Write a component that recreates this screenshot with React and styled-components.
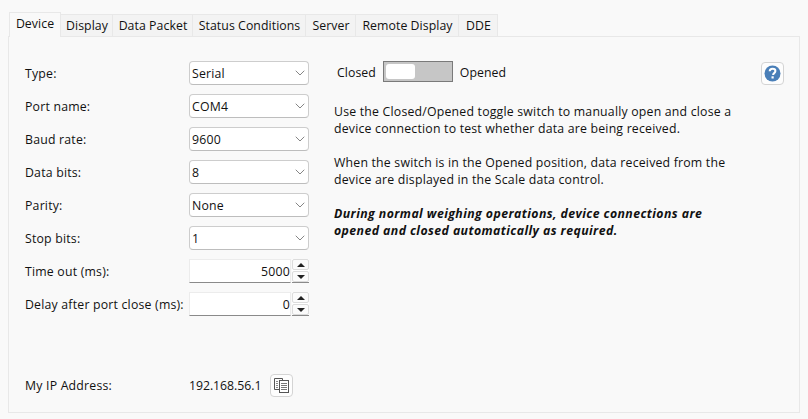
import React from 'react'
import styled, { createGlobalStyle } from 'styled-components'
import { ChevronDown } from 'lucide-react'

const GlobalStyle = createGlobalStyle`
    html, body {
        margin: 0;
        padding: 0;
        background: #f9f9f9;
    }
    body {
        font-family: "Open Sans", "Noto Sans", sans-serif;
        font-size: 12.3px;
        letter-spacing: 0.2px;
        color: #111;
    }
`

const selects = [
    { label: 'Type:', value: 'Serial' },
    { label: 'Port name:', value: 'COM4' },
    { label: 'Baud rate:', value: '9600' },
    { label: 'Data bits:', value: '8' },
    { label: 'Parity:', value: 'None' },
    { label: 'Stop bits:', value: '1' },
]

const spinners = [
    { label: 'Time out (ms):', value: '5000' },
    { label: 'Delay after port close (ms):', value: '0' },
]

const tabs = [
    { name: 'Device', width: 52 },
    { name: 'Display', width: 52 },
    { name: 'Data Packet', width: 80 },
    { name: 'Status Conditions', width: 113 },
    { name: 'Server', width: 50 },
    { name: 'Remote Display', width: 103 },
    { name: 'DDE', width: 39 },
]

const App = () => (
    <Page>
        <GlobalStyle />
        <TabBar>
            {tabs.map((tab, i) => (
                <Tab key={tab.name} $active={i === 0} $width={tab.width}>{tab.name}</Tab>
            ))}
        </TabBar>
        <Panel>
            <LeftColumn>
                <Rows>
                    {selects.map(row => (
                        <Row key={row.label}>
                            <Label>{row.label}</Label>
                            <Select>
                                {row.value}
                                <ChevronDown size={16} strokeWidth={0.9} color="#333" />
                            </Select>
                        </Row>
                    ))}
                    {spinners.map(row => (
                        <Row key={row.label}>
                            <Label>{row.label}</Label>
                            <Spinner>
                                <SpinValue>{row.value}</SpinValue>
                                <SpinButtons>
                                    <SpinButton><UpArrow /></SpinButton>
                                    <SpinButton><DownArrow /></SpinButton>
                                </SpinButtons>
                            </Spinner>
                        </Row>
                    ))}
                </Rows>
                <IpRow>
                    <Label>My IP Address:</Label>
                    <IpValue>192.168.56.1</IpValue>
                    <IconButton>
                        <svg width="17" height="17" viewBox="0 0 17 17" fill="none" stroke="#555" strokeWidth="1">
                            <path d="M6.500 12.500h-5v-11h8v2" />
                            <path d="M3 4.500h2M3 6.500h2M3 8.500h2M3 10.500h2" stroke="#888" />
                            <rect x="6.500" y="3.500" width="9" height="12" fill="#fff" />
                            <path d="M8 6.500h6M8 8.500h6M8 10.500h6M8 12.500h6" stroke="#777" />
                        </svg>
                    </IconButton>
                </IpRow>
            </LeftColumn>
            <RightColumn>
                <ToggleRow>
                    <ToggleLabel>Closed</ToggleLabel>
                    <Toggle><Knob /></Toggle>
                    <ToggleLabel>Opened</ToggleLabel>
                </ToggleRow>
                <Text>Use the Closed/Opened toggle switch to manually open and close a device connection to test whether data are being received.</Text>
                <Text>When the switch is in the Opened position, data received from the device are displayed in the Scale data control.</Text>
                <Text $bold>During normal weighing operations, device connections are opened and closed automatically as required.</Text>
            </RightColumn>
            <HelpButton>
                <svg width="17" height="17" viewBox="0 0 17 17">
                    <circle cx="8.500" cy="8.500" r="8" fill="#4a7fb8" />
                    <path d="M5.700 6.300c0-1.700 1.200-2.500 2.900-2.500s2.800.9 2.800 2.300c0 2-2.300 2-2.300 3.800" fill="none" stroke="#fff" strokeWidth="2" />
                    <rect x="7.500" y="11.300" width="2.200" height="2.200" fill="#fff" />
                </svg>
            </HelpButton>
        </Panel>
    </Page>
)

const UpArrow = styled.span`
    width: 0;
    height: 0;
    border-left: 4px solid transparent;
    border-right: 4px solid transparent;
    border-bottom: 4px solid #222;
`

const DownArrow = styled.span`
    width: 0;
    height: 0;
    border-left: 4px solid transparent;
    border-right: 4px solid transparent;
    border-top: 4px solid #222;
`

const Page = styled.div`
    width: 808px;
    height: 419px;
    padding: 12px 8px 6px;
    box-sizing: border-box;
    display: flex;
    flex-direction: column;
    overflow: hidden;
`

const TabBar = styled.div`
    display: flex;
    align-items: flex-end;
    height: 25px;
    padding-left: 1px;
    margin-bottom: -1px;
    position: relative;
    z-index: 1;
`

const Tab = styled.div`
    box-sizing: border-box;
    width: ${p => p.$width}px;
    height: ${p => (p.$active ? 25 : 23)}px;
    display: flex;
    align-items: center;
    justify-content: center;
    background: ${p => (p.$active ? '#f9f9f9' : '#f3f3f3')};
    border: 1px solid #e8e8e8;
    border-left-width: ${p => (p.$active ? 1 : 0)}px;
    border-bottom: ${p => (p.$active ? '0' : '1px solid #e8e8e8')};
    padding-bottom: ${p => (p.$active ? 3 : 0)}px;
    padding-left: ${p => (p.$active ? 0 : 1)}px;
    letter-spacing: 0.06px;
`

const Panel = styled.div`
    flex: 1;
    box-sizing: border-box;
    border: 1px solid #e8e8e8;
    display: flex;
    padding: 24px 15px 15px 16px;
`

const LeftColumn = styled.div`
    width: 284px;
    flex-shrink: 0;
    display: flex;
    flex-direction: column;
    justify-content: space-between;
`

const Rows = styled.div`
    display: flex;
    flex-direction: column;
    gap: 9px;
`

const Row = styled.div`
    display: flex;
    align-items: center;
    height: 24px;
`

const Label = styled.div`
    width: 164px;
    flex-shrink: 0;
    white-space: nowrap;
`

const Select = styled.div`
    box-sizing: border-box;
    width: 120px;
    height: 24px;
    background: #fff;
    border: 1px solid #cdcdcd;
    border-bottom-color: #bdbdbd;
    border-radius: 4px;
    padding: 0 0 0 2px;
    display: flex;
    align-items: center;
    justify-content: space-between;
`

const Spinner = styled.div`
    width: 120px;
    height: 24px;
    display: flex;
`

const SpinValue = styled.div`
    flex: 1;
    box-sizing: border-box;
    background: #fff;
    border: 1px solid #ececec;
    border-bottom: 1px solid #8a8a8a;
    display: flex;
    align-items: center;
    justify-content: flex-end;
`

const SpinButtons = styled.div`
    width: 17px;
    box-sizing: border-box;
    margin-left: 1px;
    background: #fff;
    border-bottom: 1px solid #8a8a8a;
    display: flex;
    flex-direction: column;
    gap: 1px;
`

const SpinButton = styled.div`
    flex: 1;
    box-sizing: border-box;
    display: flex;
    align-items: center;
    justify-content: center;
    background: #fbfbfb;
    border: 1px solid #dcdcdc;
    border-radius: 2px;
`

const IpRow = styled.div`
    display: flex;
    align-items: center;
    height: 24px;
`

const IpValue = styled.div`
    width: 81px;
    letter-spacing: -0.05px;
`

const IconButton = styled.div`
    box-sizing: border-box;
    width: 23px;
    height: 23px;
    border: 1px solid #d4d4d4;
    border-radius: 4px;
    background: #fdfdfd;
    display: flex;
    align-items: center;
    justify-content: center;
`

const RightColumn = styled.div`
    width: 400px;
    margin-left: 25px;
    display: flex;
    flex-direction: column;
`

const ToggleRow = styled.div`
    display: flex;
    align-items: center;
    gap: 7px;
    height: 21px;
    padding-left: 3px;
    margin-bottom: 21px;
`

const ToggleLabel = styled.span`
    padding-top: 2px;
    letter-spacing: 0.05px;
`

const Toggle = styled.div`
    box-sizing: border-box;
    width: 70px;
    height: 21px;
    background: #c6c6c6;
    border: 1px solid #7a7a7a;
    padding: 2px;
    display: flex;
`

const Knob = styled.div`
    width: 29px;
    height: 15px;
    background: #fff;
    border-radius: 3px;
`

const Text = styled.p`
    margin: 0 0 17px;
    line-height: 17px;
    font-weight: ${p => (p.$bold ? 700 : 400)};
    font-style: ${p => (p.$bold ? 'italic' : 'normal')};
    letter-spacing: ${p => (p.$bold ? 0.42 : 0.2)}px;
`

const HelpButton = styled(IconButton)`
    margin-left: 27px;
    margin-top: 1px;
`

export default App
